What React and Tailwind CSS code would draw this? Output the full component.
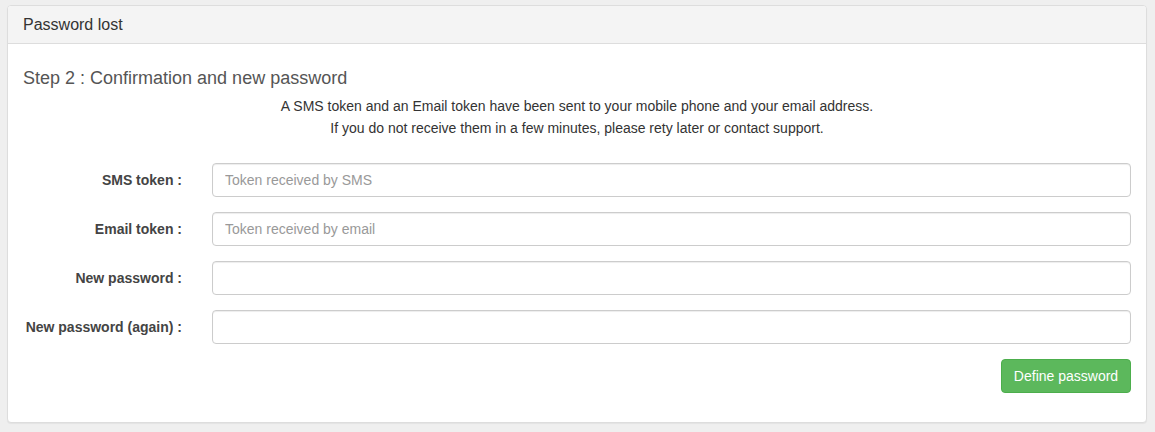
import React from 'react';

const fields = [
  { label: 'SMS token :', placeholder: 'Token received by SMS', type: 'text' },
  { label: 'Email token :', placeholder: 'Token received by email', type: 'text' },
  { label: 'New password :', placeholder: '', type: 'password' },
  { label: 'New password (again) :', placeholder: '', type: 'password' },
];

export default function App() {
  return (
    <div className="min-h-[432px] w-[1155px] bg-[#efefef] pt-[5px] pl-[7px] pr-[8px] font-['Liberation_Sans',Arial,sans-serif] text-[#333]">
      <div className="rounded-[4px] border border-[#dddddd] bg-white shadow-[0_1px_1px_rgba(0,0,0,0.05)]">
        {/* Heading */}
        <div className="h-[38px] border-b border-[#dddddd] bg-[#f4f4f4] rounded-t-[3px] px-[15px] flex items-center text-[16px] text-[#333]">
          Password lost
        </div>

        <div className="px-[15px] pt-[24px] pb-[29px]">
          <h4 className="text-[18px] leading-[20px] text-[#555] mb-[7px]">
            Step 2 : Confirmation and new password
          </h4>
          <p className="text-center text-[14px] leading-[22px] text-[#333]">
            A SMS token and an Email token have been sent to your mobile phone and your email address.
            <br />
            If you do not receive them in a few minutes, please rety later or contact support.
          </p>

          <form className="mt-[24px] flex flex-col gap-[15px]" onSubmit={(e) => e.preventDefault()}>
            {fields.map((f, idx) => (
              <div key={idx} className="flex items-center">
                <label className="w-[189px] shrink-0 pr-[30px] text-right text-[14px] font-bold text-[#444]">
                  {f.label}
                </label>
                <input
                  type={f.type}
                  placeholder={f.placeholder}
                  className="h-[34px] flex-1 rounded-[4px] border border-[#cccccc] bg-white px-[12px] text-[14px] text-[#555] placeholder:text-[#999] shadow-[inset_0_1px_1px_rgba(0,0,0,0.075)] outline-none"
                />
              </div>
            ))}
            <div className="flex justify-end">
              <button
                type="submit"
                className="h-[34px] w-[130px] rounded-[4px] border border-[#4cae4c] bg-[#5cb85c] text-[14px] font-medium text-white"
              >
                Define password
              </button>
            </div>
          </form>
        </div>
      </div>
    </div>
  );
}
